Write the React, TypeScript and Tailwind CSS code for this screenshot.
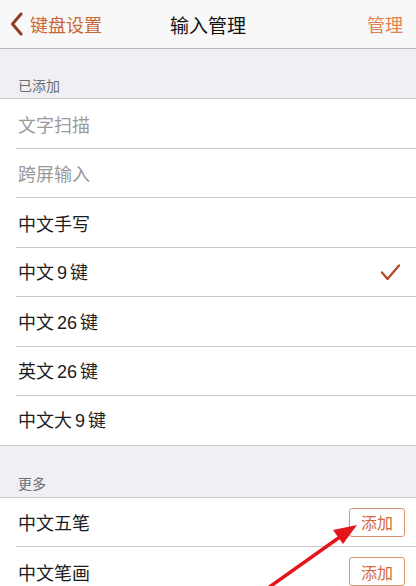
import React from "react";

const font = { fontFamily: '"Noto Sans CJK SC", "Noto Sans", sans-serif' };

function Num({ children }: { children: React.ReactNode }) {
  return <span className="mx-[3px]" style={{ fontFamily: '"Liberation Sans", "Noto Sans CJK SC", sans-serif' }}>{children}</span>;
}

function Row({
  children,
  gray,
  last,
  right,
}: {
  children: React.ReactNode;
  gray?: boolean;
  last?: boolean;
  right?: React.ReactNode;
}) {
  return (
    <div className={`relative h-[49.5px] bg-white flex items-center pl-[18px] pr-[11px] ${last ? "border-b border-[#c8c7cc]" : ""}`}>
      <span className={`text-[18px] leading-none ${gray ? "text-[#9a9a9a]" : "text-[#1c1c1c]"}`}>{children}</span>
      <div className="ml-auto flex items-center">{right}</div>
      {!last && <div className="absolute left-[16px] right-0 bottom-0 h-px bg-[#c8c7cc]" />}
    </div>
  );
}

function AddBtn() {
  return (
    <div className="w-[56px] h-[29px] border border-[#d99474] rounded-[3px] flex items-center justify-center text-[16px] text-[#d2693c] leading-none">
      添加
    </div>
  );
}

export default function App() {
  return (
    <div className="relative w-[416px] h-[586px] overflow-hidden bg-[#efeff4]" style={font}>
      {/* Nav bar */}
      <div className="h-[49px] bg-[#f8f8f8] border-b border-[#b8b8bc] flex items-center px-[10px] relative">
        <div className="flex items-center">
          <svg width="13" height="24" viewBox="0 0 13 24" className="mr-[7px]">
            <path d="M11 2 L2.5 12 L11 22" fill="none" stroke="#8f3f1f" strokeWidth="3" strokeLinecap="round" strokeLinejoin="round" />
          </svg>
          <span className="text-[18px] text-[#c8673b] leading-none">键盘设置</span>
        </div>
        <div className="absolute left-0 right-0 text-center text-[19px] text-[#111] leading-none pointer-events-none">输入管理</div>
        <span className="ml-auto mr-[3px] text-[18px] text-[#e2814f] leading-none">管理</span>
      </div>

      {/* Section header */}
      <div className="h-[50px] flex items-end pl-[18px] pb-[6px] border-b border-[#c8c7cc]">
        <span className="text-[14px] text-[#6d6d72] leading-none">已添加</span>
      </div>

      <Row gray>文字扫描</Row>
      <Row gray>跨屏输入</Row>
      <Row>中文手写</Row>
      <Row
        right={
          <svg width="21" height="19" viewBox="0 0 21 19" className="mr-[4px]">
            <path d="M2 9.5 L7.5 16 L19 2.5" fill="none" stroke="#b8482a" strokeWidth="2.3" strokeLinecap="round" strokeLinejoin="round" />
          </svg>
        }
      >
        中文<Num>9</Num>键
      </Row>
      <Row>
        中文<Num>26</Num>键
      </Row>
      <Row>
        英文<Num>26</Num>键
      </Row>
      <Row last>
        中文大<Num>9</Num>键
      </Row>

      <div className="h-[52px] flex items-end pl-[18px] pb-[7px] border-b border-[#c8c7cc]">
        <span className="text-[14px] text-[#6d6d72] leading-none">更多</span>
      </div>

      <Row right={<AddBtn />}>中文五笔</Row>
      <Row right={<AddBtn />}>中文笔画</Row>

      {/* Red arrow annotation */}
      <svg className="absolute left-0 top-0 pointer-events-none" width="416" height="586" viewBox="0 0 416 586">
        <line x1="268" y1="588" x2="342" y2="535.5" stroke="#e3161b" strokeWidth="3.5" strokeLinecap="round" />
        <polygon points="357,525 333,530 343,544" fill="#e3161b" />
      </svg>
    </div>
  );
}
